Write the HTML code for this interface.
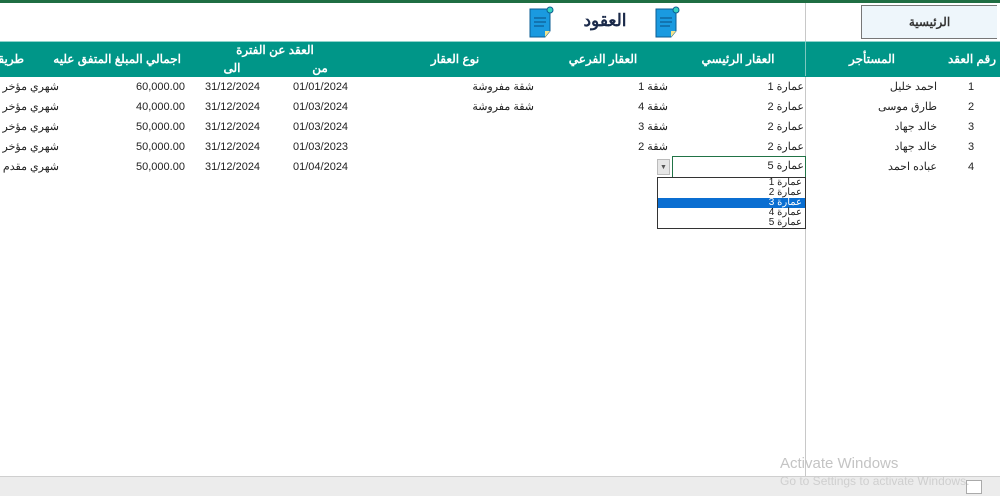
<!DOCTYPE html>
<html><head><meta charset="utf-8"><style>
body{margin:0;width:1000px;height:495px;position:relative;overflow:hidden;background:#fff;font-family:"Liberation Sans","Noto Sans CJK SC",sans-serif;font-size:11px;color:#222}
.a{position:absolute;white-space:nowrap}
.h{color:#fff;font-weight:bold;font-size:12px}
.r{text-align:right}
.c{text-align:center}
</style></head><body>
<div class="a" style="left:0;top:0;width:1000px;height:3px;background:#1f6e43"></div>
<div class="a" style="left:805px;top:3px;width:1px;height:473px;background:#c8c8c8"></div>
<div class="a c" style="left:861px;top:5px;width:135px;height:32px;background:#eef6fb;border:1px solid #777;border-right:none;line-height:32px;font-size:12px;color:#333;font-weight:bold">الرئيسية</div>
<svg class="a" style="left:528px;top:5px" width="28" height="34" viewBox="0 0 28 34"><path d="M2 4h20v22l-5 6H2z" fill="#1a9ae0" stroke="#0b5e93"/><path d="M17 32l5-6h-5z" fill="#f3e48c"/><path d="M6 13h12M6 17h12M6 21h10" stroke="#0b4f80"/><circle cx="22" cy="5" r="3" fill="#36d3c0" stroke="#0b5e93"/></svg>
<svg class="a" style="left:654px;top:5px" width="28" height="34" viewBox="0 0 28 34"><path d="M2 4h20v22l-5 6H2z" fill="#1a9ae0" stroke="#0b5e93"/><path d="M17 32l5-6h-5z" fill="#f3e48c"/><path d="M6 13h12M6 17h12M6 21h10" stroke="#0b4f80"/><circle cx="22" cy="5" r="3" fill="#36d3c0" stroke="#0b5e93"/></svg>
<div class="a c" style="left:570px;top:11px;width:70px;font-size:17px;font-weight:bold;color:#1b2a4a">العقود</div>
<div class="a" style="left:0;top:41px;width:1000px;height:35px;background:#009688;border-top:1px solid #8fd3cc"></div>
<div class="a" style="left:805px;top:42px;width:1px;height:34px;background:#7cc7bf"></div>
<div class="a h r" style="right:4px;top:52px">رقم العقد</div>
<div class="a h c" style="left:822px;top:52px;width:100px">المستأجر</div>
<div class="a h c" style="left:688px;top:52px;width:100px">العقار الرئيسي</div>
<div class="a h c" style="left:553px;top:52px;width:100px">العقار الفرعي</div>
<div class="a h c" style="left:405px;top:52px;width:100px">نوع العقار</div>
<div class="a h c" style="left:215px;top:43px;width:120px">العقد عن الفترة</div>
<div class="a h c" style="left:300px;top:61px;width:40px">من</div>
<div class="a h c" style="left:212px;top:61px;width:40px">الى</div>
<div class="a h r" style="right:819px;top:52px">اجمالي المبلغ المتفق عليه</div>
<div class="a h r" style="right:976px;top:52px">طريقة</div>
<div class="a" style="top:77px;left:0;width:1000px">
<div style="position:relative;height:100px;line-height:20px">
<div class="a" style="left:968px;top:0">1<br>2<br>3<br>3<br>4</div>
<div class="a r" style="right:63px;top:0">احمد خليل<br>طارق موسى<br>خالد جهاد<br>خالد جهاد<br>عباده احمد</div>
<div class="a r" style="right:196px;top:0">عمارة 1<br>عمارة 2<br>عمارة 2<br>عمارة 2<br>عمارة 5</div>
<div class="a r" style="right:332px;top:0">شقة 1<br>شقة 4<br>شقة 3<br>شقة 2<br>1</div>
<div class="a r" style="right:466px;top:0">شقة مفروشة<br>شقة مفروشة</div>
<div class="a" style="left:293px;top:0">01/01/2024<br>01/03/2024<br>01/03/2024<br>01/03/2023<br>01/04/2024</div>
<div class="a" style="left:205px;top:0">31/12/2024<br>31/12/2024<br>31/12/2024<br>31/12/2024<br>31/12/2024</div>
<div class="a" style="left:136px;top:0">60,000.00<br>40,000.00<br>50,000.00<br>50,000.00<br>50,000.00</div>
<div class="a r" style="right:941px;top:0">شهري مؤخر<br>شهري مؤخر<br>شهري مؤخر<br>شهري مؤخر<br>شهري مقدم</div>
</div></div>
<div class="a" style="left:672px;top:156px;width:132px;height:20px;border:1px solid #217346;background:#fff"></div>
<div class="a r" style="right:196px;top:159px">عمارة 5</div>
<div class="a" style="left:657px;top:159px;width:13px;height:16px;background:#e6e6e6;border:1px solid #bbb;box-sizing:border-box;font-size:7px;text-align:center;line-height:15px;color:#555">▼</div>
<div class="a" style="left:657px;top:177px;width:147px;height:50px;border:1px solid #333;background:#fff;font-size:10px;line-height:10px;text-align:right">
<div style="padding-right:3px">عمارة 1</div><div style="padding-right:3px">عمارة 2</div><div style="padding-right:3px;background:#0a6ed1;color:#fff">عمارة 3</div><div style="padding-right:3px">عمارة 4</div><div style="padding-right:3px">عمارة 5</div></div>
<div class="a" style="left:0;top:476px;width:1000px;height:19px;background:#ececec;border-top:1px solid #cfcfcf"></div>
<div class="a" style="left:966px;top:480px;width:14px;height:12px;background:#fff;border:1px solid #aaa"></div>
<div class="a" style="left:780px;top:455px;font-size:15px;color:#c4c4c4">Activate Windows</div>
<div class="a" style="left:780px;top:474px;font-size:12px;color:#cfcfcf">Go to Settings to activate Windows.</div>
</body></html>
